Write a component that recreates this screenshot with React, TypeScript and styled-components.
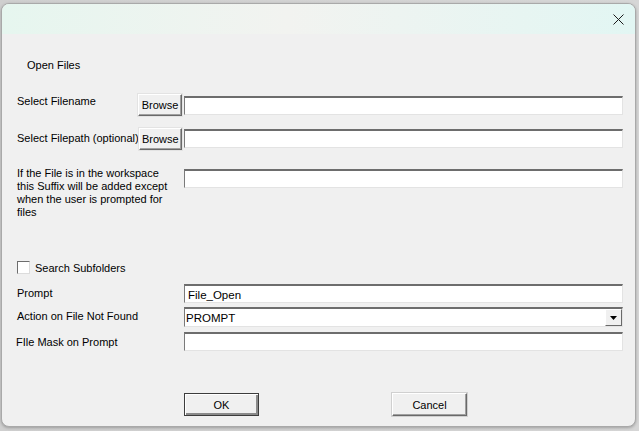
import React, { useState } from 'react';
import styled, { createGlobalStyle } from 'styled-components';

const GlobalStyle = createGlobalStyle`
  html, body {
    margin: 0;
    padding: 0;
    background: #d4d4d4;
    width: 639px;
    height: 431px;
    overflow: hidden;
  }
  * { box-sizing: border-box; }
`;

const Screen = styled.div`
  width: 639px;
  height: 431px;
  padding: 3px 3px 4px 1px;
  background: linear-gradient(90deg, #cfcfcf 0%, #d6d6d6 100%);
`;

const Window = styled.div`
  width: 635px;
  height: 424px;
  display: flex;
  flex-direction: column;
  background: #f0f0f0;
  border: 1px solid #a9a9a9;
  border-radius: 8px;
  overflow: hidden;
  box-shadow: 0 1px 3px rgba(0, 0, 0, 0.25);
  font-family: Tahoma, 'Liberation Sans', Arial, sans-serif;
  font-size: 11px;
  color: #000;
`;

const TitleBar = styled.div`
  height: 30px;
  flex: none;
  display: flex;
  justify-content: flex-end;
  align-items: center;
  background: linear-gradient(90deg, #e6f6ef 0%, #f2f3f0 45%, #e2f6f3 100%);
`;

const CloseButton = styled.button`
  width: 34px;
  height: 30px;
  border: none;
  background: transparent;
  display: flex;
  align-items: center;
  justify-content: center;
  padding: 0;
  cursor: pointer;
`;

const Body = styled.div`
  flex: 1;
  display: flex;
  flex-direction: column;
  padding: 0 12px 0 15px;
`;

const Heading = styled.div`
  margin: 25px 0 0 10px;
  height: 13px;
  line-height: 13px;
`;

const Row = styled.div<{ $top: number; $height: number }>`
  display: flex;
  align-items: flex-start;
  flex: none;
  height: ${(p) => p.$height}px;
  margin-top: ${(p) => p.$top}px;
`;

const LeftCell = styled.div`
  width: 167px;
  flex: none;
  display: flex;
  justify-content: space-between;
  align-items: flex-start;
  padding-right: 2px;
`;

const Label = styled.div<{ $offset?: number; $shift?: number }>`
  line-height: 13px;
  margin-top: ${(p) => p.$offset ?? 0}px;
  margin-left: ${(p) => p.$shift ?? 0}px;
  white-space: nowrap;
`;

const WrapLabel = styled.div`
  line-height: 13px;
  width: 160px;
`;

const BrowseButton = styled.button`
  width: 44px;
  height: 22px;
  padding: 0;
  font: inherit;
  color: #000;
  background: #f0f0f0;
  border: 1px solid;
  border-color: #fff #696969 #696969 #fff;
  box-shadow: inset -1px -1px 0 #a0a0a0;
  outline: 1px solid #e3e3e3;
`;

const TextBox = styled.input<{ $top?: number }>`
  width: 439px;
  height: 19px;
  margin-top: ${(p) => p.$top ?? 0}px;
  padding: 1px 3px 0;
  font: inherit;
  font-size: 11.5px;
  color: #000;
  background: #fff;
  border-style: solid;
  border-width: 2px 1px 1px 1px;
  border-color: #6d6d6d #e3e3e3 #e3e3e3 #7a7a7a;
  outline: none;
`;

const SelectBox = styled.div`
  width: 439px;
  height: 20px;
  display: flex;
  align-items: center;
  background: #fff;
  border-style: solid;
  border-width: 2px 1px 1px 1px;
  border-color: #6d6d6d #e3e3e3 #e3e3e3 #7a7a7a;
  padding-left: 1px;
  font-size: 11.5px;
`;

const SelectValue = styled.span`
  flex: 1;
`;

const DropButton = styled.div`
  width: 17px;
  height: 17px;
  display: flex;
  align-items: center;
  justify-content: center;
  background: #f0f0f0;
  border: 1px solid;
  border-color: #fff #696969 #696969 #fff;
`;

const CheckRow = styled.label`
  display: flex;
  align-items: center;
  flex: none;
  gap: 5px;
  margin-top: 42px;
  height: 13px;
`;

const CheckBox = styled.span`
  width: 13px;
  height: 13px;
  background: #fff;
  border: 1px solid #6d6d6d;
  border-right-color: #dcdcdc;
  border-bottom-color: #dcdcdc;
`;

const Footer = styled.div`
  display: flex;
  flex: none;
  margin-top: 42px;
  padding-left: 167px;
  gap: 133px;
`;

const DialogButton = styled.button<{ $default?: boolean }>`
  width: 75px;
  height: 23px;
  padding: 0;
  font: inherit;
  color: #000;
  background: #f0f0f0;
  border: 1px solid;
  border-color: ${(p) => (p.$default ? '#3c3c3c' : '#fff #696969 #696969 #fff')};
  box-shadow: ${(p) =>
    p.$default
      ? 'inset 1px 1px 0 #fff, inset -2px -2px 0 #8a8a8a'
      : 'inset -1px -1px 0 #a0a0a0'};
  outline: ${(p) => (p.$default ? 'none' : '1px solid #d0d0d0')};
`;

export default function App() {
  const [prompt, setPrompt] = useState('File_Open');

  return (
    <>
      <GlobalStyle />
      <Screen>
        <Window>
          <TitleBar>
            <CloseButton aria-label="Close">
              <svg width="11" height="11" viewBox="0 0 11 11">
                <path d="M0.5 0.5 L10.5 10.5 M10.5 0.5 L0.5 10.5" stroke="#1a1a1a" strokeWidth="1" />
              </svg>
            </CloseButton>
          </TitleBar>
          <Body>
            <Heading>Open Files</Heading>

            <Row $top={22} $height={22}>
              <LeftCell>
                <Label $offset={1}>Select Filename</Label>
                <BrowseButton>Browse</BrowseButton>
              </LeftCell>
              <TextBox $top={2} />
            </Row>

            <Row $top={12} $height={22}>
              <LeftCell>
                <Label $offset={4}>Select Filepath (optional)</Label>
                <BrowseButton>Browse</BrowseButton>
              </LeftCell>
              <TextBox $top={1} />
            </Row>

            <Row $top={17} $height={52}>
              <LeftCell>
                <WrapLabel>
                  If the File is in the workspace this Suffix will be added except when the user is
                  prompted for files
                </WrapLabel>
              </LeftCell>
              <TextBox $top={2} />
            </Row>

            <CheckRow>
              <CheckBox />
              Search Subfolders
            </CheckRow>

            <Row $top={10} $height={19}>
              <LeftCell>
                <Label $offset={3}>Prompt</Label>
              </LeftCell>
              <TextBox value={prompt} onChange={(e) => setPrompt(e.target.value)} />
            </Row>

            <Row $top={4} $height={20}>
              <LeftCell>
                <Label $offset={3}>Action on File Not Found</Label>
              </LeftCell>
              <SelectBox>
                <SelectValue>PROMPT</SelectValue>
                <DropButton>
                  <svg width="7" height="4" viewBox="0 0 7 4">
                    <path d="M0 0 H7 L3.5 4 Z" fill="#000" />
                  </svg>
                </DropButton>
              </SelectBox>
            </Row>

            <Row $top={5} $height={19}>
              <LeftCell>
                <Label $offset={4} $shift={-1}>FIle Mask on Prompt</Label>
              </LeftCell>
              <TextBox />
            </Row>

            <Footer>
              <DialogButton $default>OK</DialogButton>
              <DialogButton>Cancel</DialogButton>
            </Footer>
          </Body>
        </Window>
      </Screen>
    </>
  );
}
